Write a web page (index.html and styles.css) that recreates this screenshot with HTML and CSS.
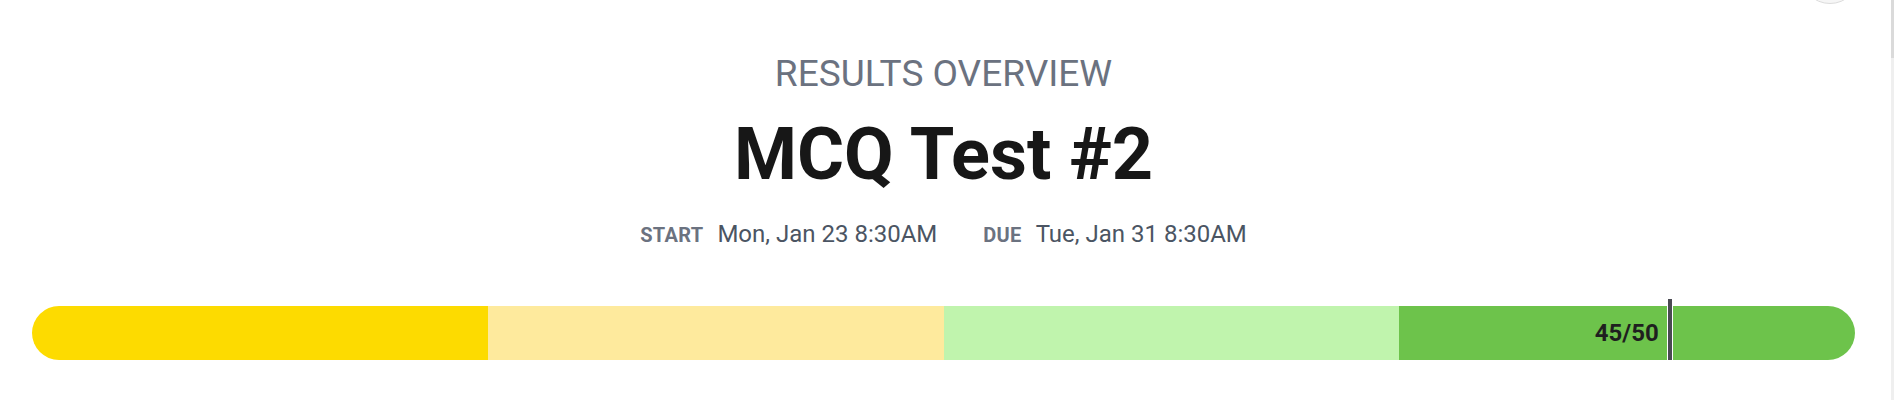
FILE: index.html
```html
<!DOCTYPE html>
<html lang="en">
<head>
<meta charset="utf-8">
<title>Results Overview</title>
<link rel="stylesheet" href="styles.css">
</head>
<body>
<div class="page">
  <div class="corner-btn"></div>
  <header class="head">
    <p class="eyebrow">RESULTS OVERVIEW</p>
    <h1 class="title">MCQ Test #2</h1>
    <div class="dates">
      <span class="date"><span class="lbl">START</span><span class="val">Mon, Jan 23 8:30AM</span></span>
      <span class="date"><span class="lbl">DUE</span><span class="val">Tue, Jan 31 8:30AM</span></span>
    </div>
  </header>
  <div class="track">
    <div class="bar">
      <div class="seg s1"></div>
      <div class="seg s2"></div>
      <div class="seg s3"></div>
      <div class="seg s4"></div>
    </div>
    <span class="score" style="right: calc(10% + 14px)">45/50</span>
    <span class="marker" style="left: 90%"></span>
  </div>
</div>
<div class="scrolltrack"><div class="thumb"></div></div>
</body>
</html>
```

FILE: styles.css
```css
html, body {
  margin: 0;
  padding: 0;
  background: #ffffff;
  font-family: Roboto, "Noto Sans", Arial, sans-serif;
  overflow: hidden;
}

.page {
  position: relative;
  margin-right: 7px;
  padding: 54px 32px 0 32px;
}

.corner-btn {
  position: absolute;
  top: -56px;
  left: 1800px;
  width: 58px;
  height: 58px;
  border-radius: 50%;
  background: #f6f6f6;
  border: 1px solid #dcdcdc;
}

.head {
  display: flex;
  flex-direction: column;
  align-items: center;
}

.eyebrow {
  margin: 0;
  font-size: 37px;
  line-height: 40px;
  font-weight: 400;
  color: #6b7280;
}

.title {
  margin: 25px 0 0 0;
  font-size: 72px;
  line-height: 72px;
  font-weight: 700;
  color: #171717;
}

.dates {
  margin-top: 29px;
  display: flex;
  justify-content: center;
  gap: 46px;
  line-height: 28px;
}

.date {
  display: flex;
  align-items: baseline;
  gap: 14px;
}

.lbl {
  font-size: 20px;
  font-weight: 700;
  letter-spacing: 0.3px;
  color: #6b7280;
}

.val {
  font-size: 24px;
  color: #4b5563;
}

.track {
  position: relative;
  margin-top: 57px;
  height: 54px;
}

.bar {
  display: flex;
  height: 54px;
  border-radius: 27px;
  overflow: hidden;
}

.seg {
  flex: 1;
}

.s1 { background: #fddb00; }
.s2 { background: #feea9d; }
.s3 { background: #c0f4ad; }
.s4 { background: #6dc34b; }

.score {
  position: absolute;
  top: 0;
  line-height: 54px;
  font-size: 24px;
  font-weight: 700;
  color: #1f1f1f;
}

.marker {
  position: absolute;
  top: -7px;
  bottom: -6px;
  width: 4px;
  transform: translateX(-100%);
  background: #4a4a52;
  border-left: 1px solid #ffffff;
  border-right: 1px solid #ffffff;
}

.scrolltrack {
  position: fixed;
  top: 0;
  right: 0;
  width: 3px;
  height: 100%;
  background: #efefef;
}

.thumb {
  height: 58px;
  background: #dadada;
}
```
